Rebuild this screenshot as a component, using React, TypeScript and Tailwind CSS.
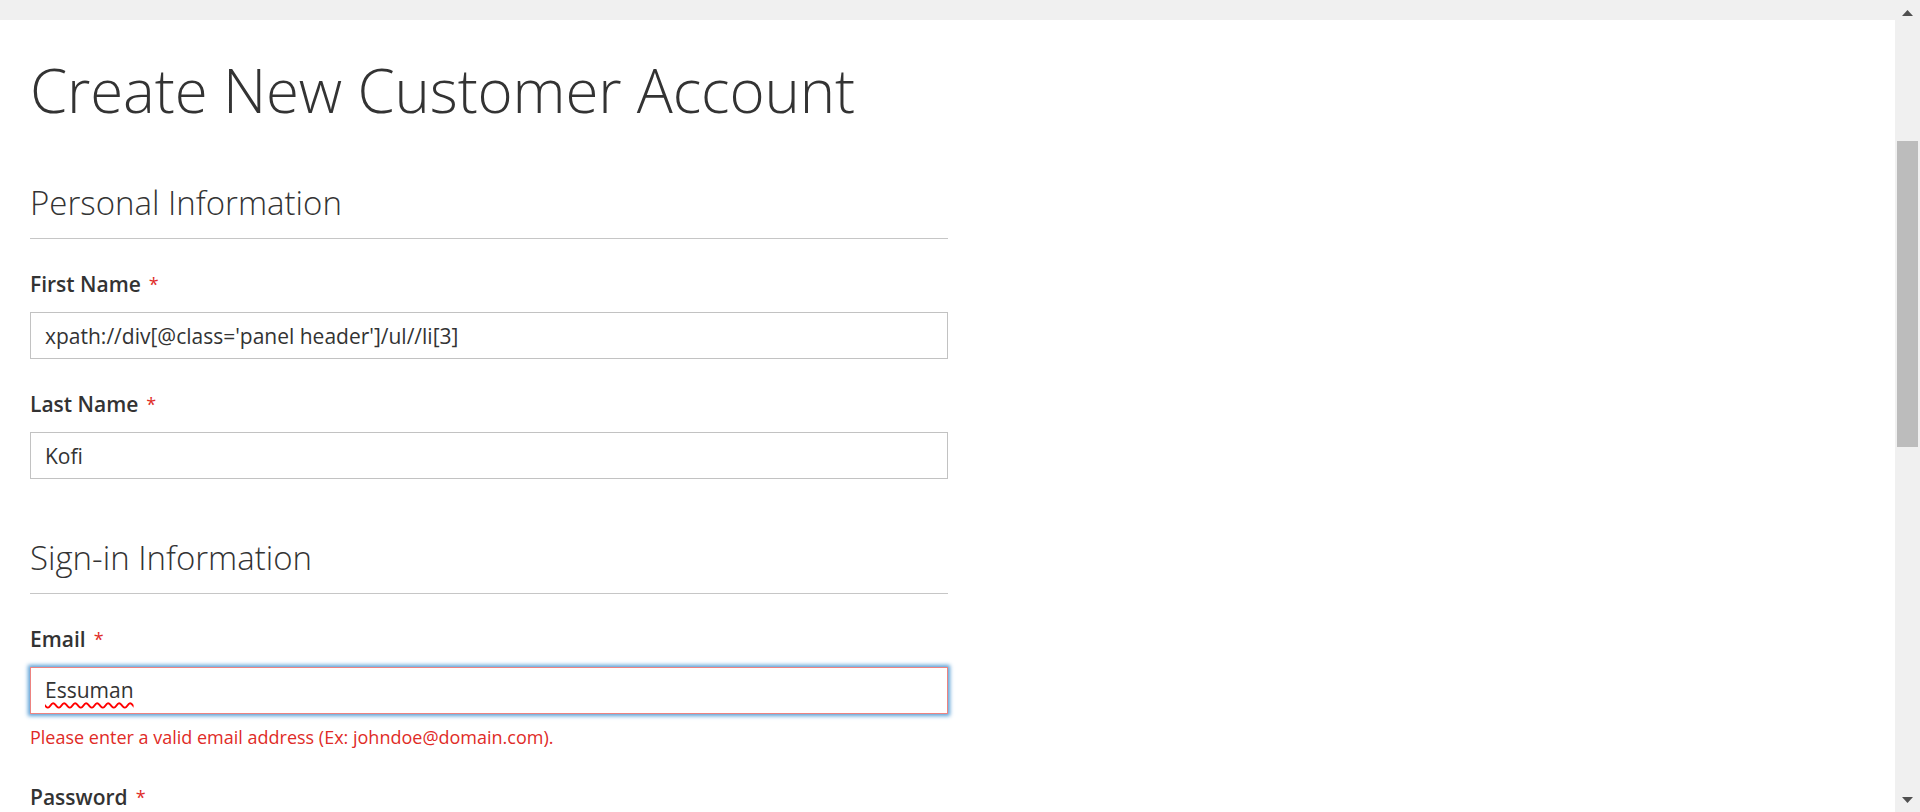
import React from 'react';

const font = "font-['Open_Sans','Liberation_Sans',sans-serif]";

const Label: React.FC<{ text: string }> = ({ text }) => (
  <div className="h-[30px] text-[21px] leading-[30px] font-semibold text-[#333333]">
    {text}
    <span className="ml-[8px] align-top text-[18px] font-normal text-[#e02b27]">*</span>
  </div>
);

const Legend: React.FC<{ text: string }> = ({ text }) => (
  <div className="border-b border-[#c6c6c6] pb-[15px]">
    <h2 className="text-[33px] leading-[40px] font-light text-[#333333]">{text}</h2>
  </div>
);

const TextField: React.FC<{ label: string; value: string }> = ({ label, value }) => (
  <div className="mt-[30px]">
    <Label text={label} />
    <input
      readOnly
      value={value}
      className="mt-[13px] block h-[47px] w-full border border-[#c2c2c2] bg-white px-[14px] text-[21px] text-[#333333] outline-none"
    />
  </div>
);

const Scrollbar: React.FC = () => (
  <div className="flex h-full w-[25px] shrink-0 flex-col items-center bg-[#f0f0f0]">
    <div className="flex h-[25px] w-full items-center justify-center">
      <svg width="11" height="6" viewBox="0 0 11 6">
        <polygon points="5.5,0 11,6 0,6" fill="#505050" />
      </svg>
    </div>
    <div className="mt-[116px] h-[306px] w-[21px] bg-[#bcbcbc]" />
    <div className="flex-1" />
    <div className="flex h-[25px] w-full items-center justify-center">
      <svg width="11" height="6" viewBox="0 0 11 6">
        <polygon points="0,0 11,0 5.5,6" fill="#505050" />
      </svg>
    </div>
  </div>
);

export default function App() {
  return (
    <div className={`flex h-[812px] w-full overflow-hidden bg-white ${font}`}>
      <div className="flex min-w-0 flex-1 flex-col">
        <div className="h-[20px] w-full bg-[#f0f0f0]" />
        <main className="px-[30px] pt-[37px]">
          <h1 className="text-[60px] leading-[66px] font-light tracking-[-0.15px] text-[#333333]">
            Create New Customer Account
          </h1>

          <form className="mt-[60px] w-1/2">
            <Legend text="Personal Information" />
            <TextField label="First Name" value="xpath://div[@class='panel header']/ul//li[3]" />
            <TextField label="Last Name" value="Kofi" />

            <div className="mt-[59px]">
              <Legend text="Sign-in Information" />
            </div>

            <div className="mt-[30px]">
              <Label text="Email" />
              <div className="mt-[13px] flex h-[47px] w-full items-center border border-[#ed8380] bg-white px-[14px] text-[21px] text-[#333333] shadow-[0_0_4px_2px_#5a9fd6]">
                <span className="underline decoration-wavy decoration-[#ff0000] decoration-[1.5px] underline-offset-4">
                  Essuman
                </span>
              </div>
              <div className="mt-[10px] text-[18px] leading-[27px] text-[#e02b27]">
                Please enter a valid email address (Ex: johndoe@domain.com).
              </div>
            </div>

            <div className="mt-[31px]">
              <Label text="Password" />
            </div>
          </form>
        </main>
      </div>
      <Scrollbar />
    </div>
  );
}
